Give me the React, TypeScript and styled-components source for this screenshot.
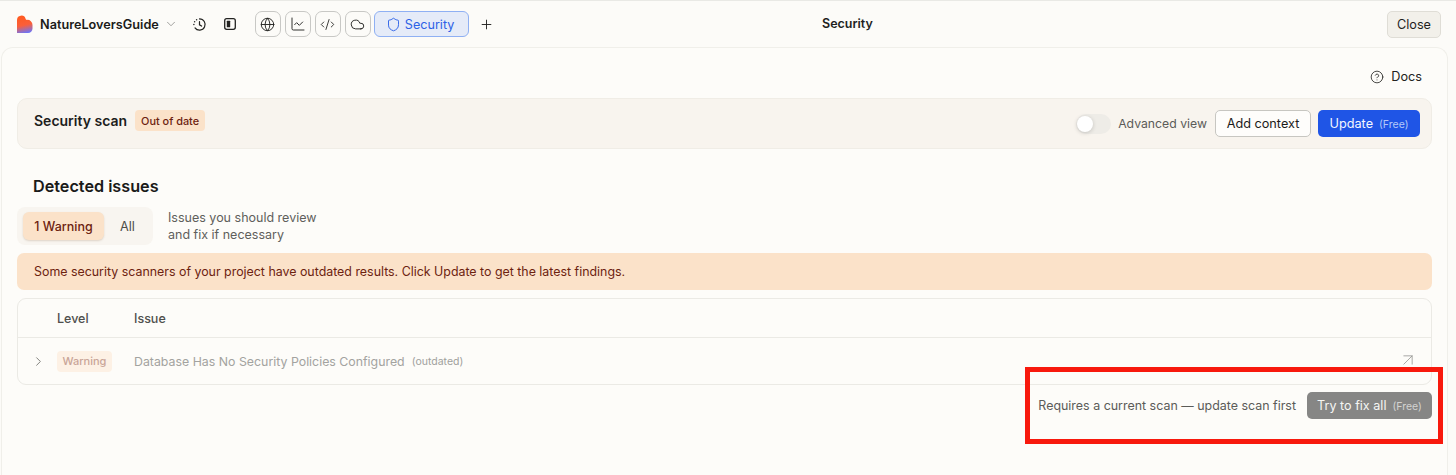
import React from "react";
import styled, { createGlobalStyle } from "styled-components";
import { ChevronDown, ChevronRight, Globe, ChartLine, CodeXml, Cloud, Shield, Plus, CircleHelp, ArrowUpRight } from "lucide-react";

const Global = createGlobalStyle`
  html, body { margin: 0; padding: 0; background: #fcfbf8; }
  body { font-family: Inter, "Liberation Sans", sans-serif; -webkit-font-smoothing: antialiased; }
  * { box-sizing: border-box; }
`;

const Page = styled.div`
  position: relative;
  width: 1456px;
  height: 475px;
  overflow: hidden;
  background: #fcfbf8;
  border-top: 1px solid #e9e9e5;
`;

const Header = styled.header`
  position: relative;
  height: 46px;
  display: flex;
  align-items: center;
  padding: 0 15px 0 16px;
`;

const Brand = styled.div`
  display: flex;
  align-items: center;
  font-size: 12.7px;
  font-weight: 600;
  color: #1b1b1a;
`;

const BrandName = styled.span`
  margin-left: 7px;
`;

const PlainIcon = styled.span<{ $left: number; $color?: string }>`
  display: inline-flex;
  margin-left: ${(p) => p.$left}px;
  color: ${(p) => p.$color || "#232321"};
`;

const Tabs = styled.nav`
  display: flex;
  align-items: center;
  gap: 4px;
  margin-left: 18px;
`;

const IconTab = styled.button`
  width: 26px;
  height: 26px;
  padding: 0;
  display: flex;
  align-items: center;
  justify-content: center;
  border: 1px solid #c8c8c5;
  border-radius: 7px;
  background: #fcfbf8;
  color: #232321;
`;

const ActiveTab = styled.button`
  width: 95px;
  height: 26px;
  margin-left: -1px;
  padding: 0 0 0 11px;
  display: flex;
  align-items: center;
  gap: 4px;
  border: 1px solid #8fb0f3;
  border-radius: 6px;
  background: #e5ebf8;
  color: #2d62e6;
  font: 400 12.6px Inter, sans-serif;
`;

const Title = styled.div`
  position: absolute;
  left: 239px;
  right: 0;
  top: 15px;
  text-align: center;
  font-size: 12.5px;
  font-weight: 600;
  line-height: 16px;
  color: #1f1f1e;
`;

const CloseButton = styled.button`
  margin-left: auto;
  width: 54px;
  height: 27px;
  padding: 0;
  border: 1px solid #dfddd6;
  border-radius: 5px;
  background: #f2f0ea;
  color: #1f1f1e;
  font: 400 12.7px Inter, sans-serif;
`;

const Panel = styled.main`
  margin: 0 8px 0 1px;
  height: 440px;
  padding: 0 15px 0 15px;
  border: 1px solid #f0efea;
  border-bottom: none;
  border-radius: 12px 12px 0 0;
  background: #fdfcf9;
`;

const DocsRow = styled.div`
  height: 50px;
  display: flex;
  justify-content: flex-end;
  align-items: flex-start;
  padding: 21px 10px 0 0;
`;

const Docs = styled.div`
  display: flex;
  align-items: center;
  gap: 7px;
  font-size: 12.7px;
  font-weight: 400;
  line-height: 16px;
  color: #222220;
`;

const ScanCard = styled.section`
  height: 51px;
  display: flex;
  align-items: center;
  padding: 0 11px 0 16px;
  border: 1px solid #f0ede6;
  border-radius: 10px;
  background: #f8f4ee;
`;

const ScanLeft = styled.div`
  display: flex;
  align-items: center;
  gap: 8px;
  margin-top: -6px;
`;

const ScanTitle = styled.h2`
  margin: 0;
  font-size: 14px;
  line-height: 20px;
  font-weight: 600;
  color: #1d1d1c;
`;

const Chip = styled.span`
  display: inline-flex;
  align-items: center;
  height: 21px;
  padding: 0 6px;
  border-radius: 4px;
  background: #fbe2c9;
  color: #6d2210;
  font-size: 10.9px;
  font-weight: 500;
`;

const ScanRight = styled.div`
  margin-left: auto;
  display: flex;
  align-items: center;
`;

const Toggle = styled.span`
  position: relative;
  display: block;
  width: 35px;
  height: 20px;
  border-radius: 10px;
  background: #eeece7;
`;

const ToggleKnob = styled.span`
  position: absolute;
  left: 1px;
  top: 2px;
  width: 16px;
  height: 16px;
  border-radius: 50%;
  background: #ffffff;
  box-shadow: 0 1px 4px rgba(0, 0, 0, 0.18);
`;

const ToggleLabel = styled.span`
  margin-left: 7px;
  font-size: 12.25px;
  color: #5b5b58;
`;

const OutlineButton = styled.button`
  margin-left: 8px;
  width: 96px;
  height: 27px;
  padding: 0;
  border: 1px solid #c7c6c1;
  border-radius: 5px;
  background: #fefdfb;
  color: #1b1b1a;
  font: 400 12.7px Inter, sans-serif;
`;

const PrimaryButton = styled.button`
  margin-left: 7px;
  width: 102px;
  height: 27px;
  padding: 0;
  border: none;
  border-radius: 5px;
  background: #1f55e6;
  color: #f4f7ff;
  font: 400 12.7px Inter, sans-serif;
`;

const Free = styled.span<{ $color: string }>`
  margin-left: 6px;
  font-size: 10.5px;
  font-weight: 400;
  color: ${(p) => p.$color};
`;

const Heading = styled.h3`
  margin: 26px 0 0 16px;
  font-size: 16.2px;
  line-height: 22px;
  font-weight: 600;
  color: #1a1a19;
`;

const FilterRow = styled.div`
  margin-top: 10px;
  display: flex;
  align-items: center;
`;

const Filter = styled.div`
  width: 136px;
  height: 38px;
  display: flex;
  align-items: center;
  padding: 0 6px;
  border-radius: 8px;
  background: #f8f5f0;
`;

const FilterActive = styled.span`
  width: 81px;
  height: 28px;
  display: flex;
  align-items: center;
  justify-content: center;
  border-radius: 6px;
  background: #fbe2c9;
  box-shadow: 0 1px 2px rgba(120, 80, 40, 0.2);
  color: #6d2210;
  font-size: 12.5px;
  font-weight: 500;
`;

const FilterOption = styled.span`
  margin-left: 16px;
  color: #4e4e4b;
  font-size: 12.7px;
  font-weight: 400;
`;

const FilterNote = styled.p`
  margin: 0 0 0 15px;
  font-size: 12.5px;
  line-height: 17px;
  color: #5f5f5c;
`;

const Banner = styled.div`
  margin-top: 8px;
  height: 37px;
  display: flex;
  align-items: center;
  padding-left: 17px;
  border-radius: 7px;
  background: #fbe2c9;
  color: #6d2210;
  font-size: 12.4px;
  font-weight: 400;
`;

const Table = styled.section`
  margin-top: 8px;
  height: 87px;
  border: 1px solid #ebeae5;
  border-radius: 9px;
`;

const TableHead = styled.div`
  height: 39px;
  display: flex;
  align-items: center;
  border-bottom: 1px solid #ebeae5;
  color: #4f4f4c;
  font-size: 12.5px;
  font-weight: 500;
`;

const LevelCol = styled.span`
  width: 116px;
  padding-left: 39px;
`;

const TableRow = styled.div`
  height: 46px;
  display: flex;
  align-items: center;
  padding-left: 13px;
  color: #a3a3a0;
  font-size: 12.35px;
`;

const RowChevron = styled.span`
  display: inline-flex;
  width: 26px;
  color: #71716e;
`;

const WarningChip = styled.span`
  display: inline-flex;
  align-items: center;
  justify-content: center;
  width: 55px;
  height: 21px;
  margin-right: 22px;
  border-radius: 4px;
  background: #fdf1e5;
  color: #c9a598;
  font-size: 11px;
  font-weight: 500;
`;

const Outdated = styled.span`
  margin-left: 7px;
  font-size: 10.5px;
  color: #a0a09d;
`;

const RowLink = styled.span`
  display: inline-flex;
  margin-left: auto;
  margin-right: 13px;
  margin-top: -3px;
  color: #8d8d8a;
`;

const Footer = styled.div`
  margin-top: 7px;
  display: flex;
  justify-content: flex-end;
  align-items: center;
  gap: 11px;
`;

const FooterNote = styled.span`
  font-size: 12.45px;
  color: #5b5b58;
`;

const FixButton = styled.button`
  width: 125px;
  height: 27px;
  padding: 0;
  border: none;
  border-radius: 5px;
  background: #868685;
  color: #f5f5f3;
  font: 400 12.6px Inter, sans-serif;
`;

const Highlight = styled.div`
  position: absolute;
  left: 1025px;
  top: 366px;
  width: 418px;
  height: 77px;
  border: 5px solid #f8190d;
`;

const Logo = () => (
  <svg width="17" height="18" viewBox="0 0 17 18">
    <defs>
      <linearGradient id="lg" x1="0.35" y1="0" x2="0.55" y2="1">
        <stop offset="0" stopColor="#ff5a1f" />
        <stop offset="0.55" stopColor="#fb5f3a" />
        <stop offset="1" stopColor="#6f74f5" />
      </linearGradient>
    </defs>
    <path d="M1 5a4.4 4.4 0 0 1 8.6-1.3c.2.8.6 1 1.3 1.2A5 5 0 0 1 16.500 10v3.500A4.500 4.500 0 0 1 12 18H1z" fill="url(#lg)" />
  </svg>
);

const HistoryIcon = () => (
  <svg width="15" height="15" viewBox="0 0 16 16" fill="none" stroke="currentColor" strokeWidth="1.3" strokeLinecap="round">
    <path d="M8 2a6 6 0 1 1-4.800 9.600" />
    <path d="M8 5v3.400l2.200 1.300" />
    <path d="M2 8v.01M2.800 5v.01M4.900 2.900v.01" strokeWidth="1.600" />
  </svg>
);

const SidebarIcon = () => (
  <svg width="14" height="14" viewBox="0 0 14 14" fill="none">
    <rect x="1.700" y="1.700" width="10.600" height="10.600" rx="2" stroke="currentColor" strokeWidth="1.300" />
    <rect x="3.800" y="3.800" width="3.400" height="6.400" rx="0.500" fill="currentColor" />
  </svg>
);

export default function App() {
  return (
    <Page>
      <Global />
      <Header>
        <Brand>
          <Logo />
          <BrandName>NatureLoversGuide</BrandName>
        </Brand>
        <PlainIcon $left={5} $color="#8d8d8a"><ChevronDown size={14} strokeWidth={1.4} /></PlainIcon>
        <PlainIcon $left={14}><HistoryIcon /></PlainIcon>
        <PlainIcon $left={16}><SidebarIcon /></PlainIcon>
        <Tabs>
          <IconTab><Globe size={15} strokeWidth={1.5} /></IconTab>
          <IconTab><ChartLine size={16} strokeWidth={1.4} /></IconTab>
          <IconTab><CodeXml size={15} strokeWidth={1.4} /></IconTab>
          <IconTab><Cloud size={15} strokeWidth={1.5} /></IconTab>
          <ActiveTab><Shield size={15} strokeWidth={1.5} />Security</ActiveTab>
        </Tabs>
        <PlainIcon $left={10}><Plus size={15} strokeWidth={1.5} /></PlainIcon>
        <Title>Security</Title>
        <CloseButton>Close</CloseButton>
      </Header>
      <Panel>
        <DocsRow>
          <Docs><CircleHelp size={14} strokeWidth={1.4} />Docs</Docs>
        </DocsRow>
        <ScanCard>
          <ScanLeft>
            <ScanTitle>Security scan</ScanTitle>
            <Chip>Out of date</Chip>
          </ScanLeft>
          <ScanRight>
            <Toggle><ToggleKnob /></Toggle>
            <ToggleLabel>Advanced view</ToggleLabel>
            <OutlineButton>Add context</OutlineButton>
            <PrimaryButton>Update<Free $color="#b4c8f8">(Free)</Free></PrimaryButton>
          </ScanRight>
        </ScanCard>
        <Heading>Detected issues</Heading>
        <FilterRow>
          <Filter>
            <FilterActive>1 Warning</FilterActive>
            <FilterOption>All</FilterOption>
          </Filter>
          <FilterNote>Issues you should review<br />and fix if necessary</FilterNote>
        </FilterRow>
        <Banner>Some security scanners of your project have outdated results. Click Update to get the latest findings.</Banner>
        <Table>
          <TableHead>
            <LevelCol>Level</LevelCol>
            <span>Issue</span>
          </TableHead>
          <TableRow>
            <RowChevron><ChevronRight size={15} strokeWidth={1.4} /></RowChevron>
            <WarningChip>Warning</WarningChip>
            Database Has No Security Policies Configured
            <Outdated>(outdated)</Outdated>
            <RowLink><ArrowUpRight size={20} strokeWidth={0.9} /></RowLink>
          </TableRow>
        </Table>
        <Footer>
          <FooterNote>Requires a current scan — update scan first</FooterNote>
          <FixButton>Try to fix all<Free $color="#d3d3d1">(Free)</Free></FixButton>
        </Footer>
      </Panel>
      <Highlight />
    </Page>
  );
}
